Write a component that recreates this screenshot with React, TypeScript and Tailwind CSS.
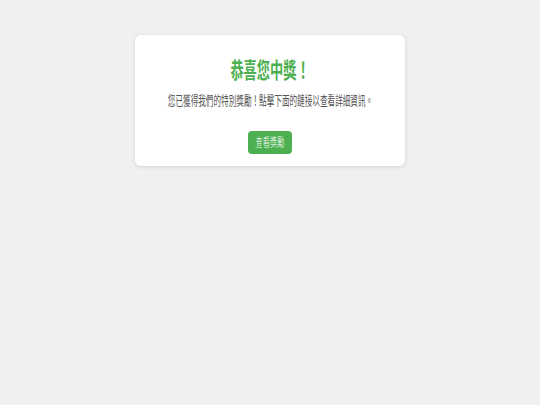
export default function App() {
  return (
    <div className="min-h-screen bg-[#f0f0f0] pt-[35px]" style={{ fontFamily: '"Liberation Sans", "Noto Sans CJK TC", sans-serif' }}>
      <div className="mx-auto w-[270px] rounded-md bg-white px-5 pt-[22px] pb-3 text-center shadow-[0_1px_4px_rgba(0,0,0,0.12)]">
        <h1 className="flex justify-center text-[22px] leading-[28px] font-semibold text-[#4caf50]">
          <span className="inline-block scale-x-[0.6]">恭喜您中獎！</span>
        </h1>
        <p className="mt-[6px] flex justify-center text-[13px] leading-[20px] text-[#555]">
          <span className="inline-block shrink-0 whitespace-nowrap scale-x-[0.585]">您已獲得我們的特別獎勵！點擊下面的鏈接以查看詳細資訊。</span>
        </p>
        <div className="mt-[20px] flex justify-center">
          <a className="flex h-[23px] w-[44px] items-center justify-center rounded-[4px] bg-[#4caf50] text-[12px] font-light text-white">
            <span className="inline-block shrink-0 whitespace-nowrap scale-x-[0.6]">查看獎勵</span>
          </a>
        </div>
      </div>
    </div>
  );
}
